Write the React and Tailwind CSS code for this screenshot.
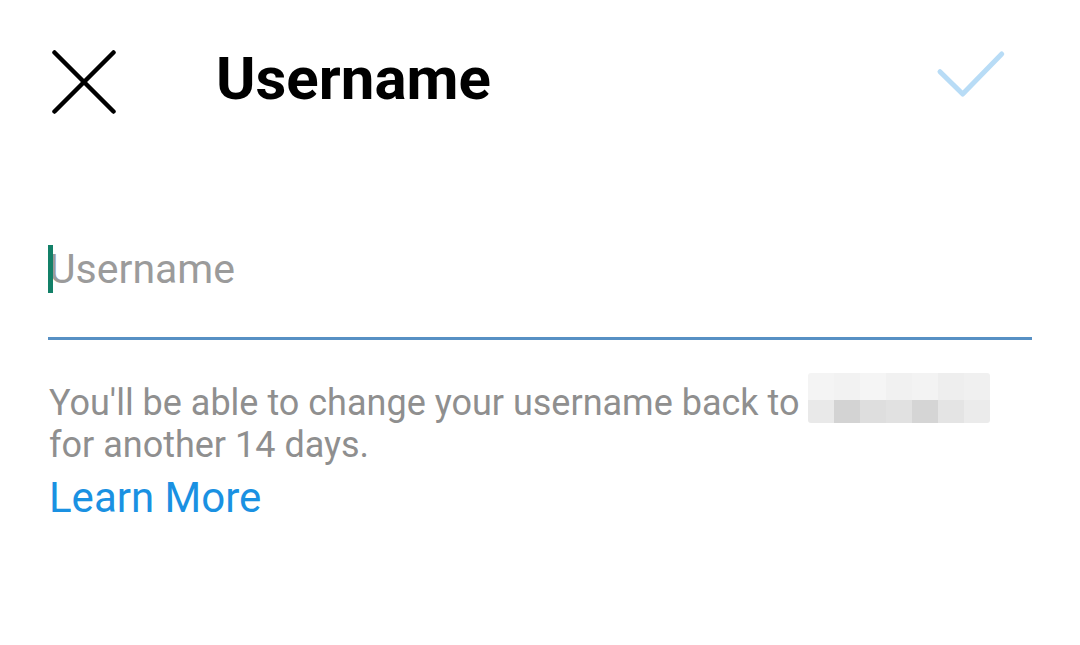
import React from "react";

const blocksTop = ["#f4f4f4", "#f2f2f2", "#f5f5f5", "#f1f1f1", "#f3f3f3", "#eeeeee", "#f0f0f0"];
const blocksBottom = ["#e9e9e9", "#d3d3d3", "#dedede", "#e1e1e1", "#d5d5d5", "#e4e4e4", "#ebebeb"];

export default function App() {
  return (
    <div
      className="w-[1080px] h-[645px] bg-white overflow-hidden"
      style={{ fontFamily: "Roboto, 'Noto Sans', sans-serif" }}
    >
      {/* Header */}
      <div className="flex items-start pt-[49px] pl-[52px] pr-[74px]">
        <svg width="64" height="64" viewBox="0 0 64 64" className="mt-[1px] shrink-0">
          <line x1="2.5" y1="2.5" x2="61.5" y2="61.5" stroke="#000" strokeWidth="4.5" strokeLinecap="round" />
          <line x1="61.5" y1="2.5" x2="2.5" y2="61.5" stroke="#000" strokeWidth="4.5" strokeLinecap="round" />
        </svg>
        <div className="ml-[100px] text-[60px] leading-[60px] font-bold text-black">Username</div>
        <svg width="71" height="50" viewBox="0 0 71 50" className="ml-auto shrink-0">
          <polyline
            points="5,22.7 27.7,45 66.7,5"
            fill="none"
            stroke="#b8dcf6"
            strokeWidth="5"
            strokeLinecap="round"
            strokeLinejoin="round"
          />
        </svg>
      </div>

      {/* Input */}
      <div className="mx-[48px] mt-[131px] border-b-[3px] border-[#5790c4] pb-[44px] relative">
        <div className="text-[41px] leading-[48px] text-[#9b9b9b] pl-[1px]">Username</div>
        <div className="absolute left-0 top-0 w-[5px] h-[48px] bg-[#138068]" />
      </div>

      {/* Helper text */}
      <div className="mx-[48px] mt-[42px] pl-[1px] text-[36px] leading-[42px] text-[#8f8f8f]">
        <div>
          You'll be able to change your username back to{" "}
          <span className="inline-block align-top h-[50px] -mt-[9px] w-[182px] overflow-hidden rounded-[3px]">
            <span className="flex h-[27px]">
              {blocksTop.map((c, i) => (
                <span key={i} className="flex-1" style={{ backgroundColor: c }} />
              ))}
            </span>
            <span className="flex h-[23px]">
              {blocksBottom.map((c, i) => (
                <span key={i} className="flex-1" style={{ backgroundColor: c }} />
              ))}
            </span>
          </span>
        </div>
        <div>for another 14 days.</div>
      </div>

      <div className="mx-[48px] mt-[8px] pl-[1px] text-[42px] leading-[48px] text-[#1a91e2]">Learn More</div>
    </div>
  );
}
